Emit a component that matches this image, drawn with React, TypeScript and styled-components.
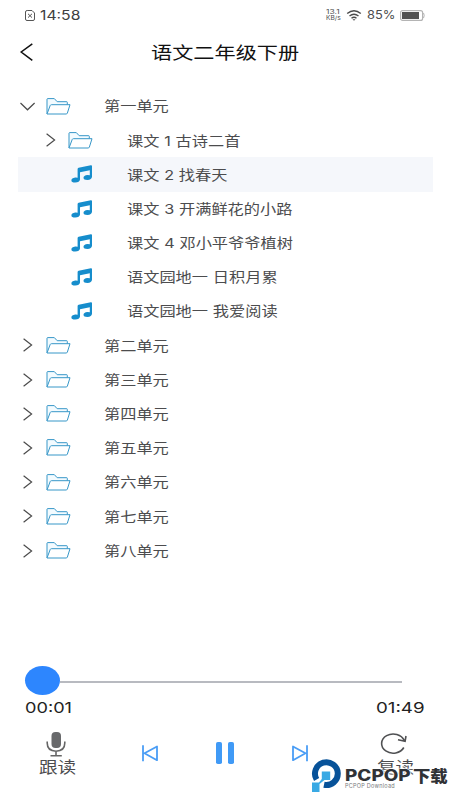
import React from "react";
import styled, { createGlobalStyle } from "styled-components";

const Global = createGlobalStyle`
  * { box-sizing: border-box; }
  html, body { margin: 0; background: #fff; }
  body { font-family: "Noto Sans CJK SC", sans-serif; overflow: hidden; }
  svg { display: block; overflow: visible; }
`;

const Screen = styled.main`
  position: relative;
  width: 450px;
  height: 800px;
  display: flex;
  flex-direction: column;
  background: #fff;
  overflow: hidden;
`;

/* Wide-set label: the glyphs are stretched horizontally from the left edge. */
const Label = styled.span<{ $size: number; $wide?: number; $color?: string; $weight?: number; $gap?: number; $track?: number; $font?: string }>`
  display: block;
  white-space: nowrap;
  transform-origin: 0 50%;
  transform: scaleX(${(p) => p.$wide ?? 1.2});
  font-family: ${(p) => (p.$font ? `"${p.$font}", ` : "")}"Noto Sans CJK SC", sans-serif;
  font-size: ${(p) => p.$size}px;
  line-height: 1;
  font-weight: ${(p) => p.$weight ?? 400};
  color: ${(p) => p.$color ?? "#4c4c4e"};
  word-spacing: ${(p) => p.$gap ?? 0}px;
  letter-spacing: ${(p) => p.$track ?? 0}px;
`;

const RowLabel = styled(Label)`
  padding-top: 2px;
`;

const StatusBar = styled.div`
  height: 30px;
  padding: 0 25px;
  display: flex;
  align-items: center;
`;
const Clock = styled.div`
  width: 301px;
  display: flex;
  align-items: center;
  gap: 5px;
`;
const Speed = styled.div`
  width: 21px;
  display: flex;
  flex-direction: column;
`;
const Percent = styled.div`
  width: 33px;
  margin-left: 6px;
  padding-top: 1px;
`;

const Header = styled.header`
  height: 59px;
  padding: 2px 0 0 20px;
  margin-top: -9px;
  display: flex;
  align-items: center;
`;
const Back = styled.div`
  width: 130.5px;
`;

const List = styled.div`
  height: 479px;
  padding: 9px 17.5px 0;
`;
const Row = styled.div<{ $active?: boolean; $nested?: boolean }>`
  height: 34.2px;
  display: grid;
  grid-template-columns: ${(p) => (p.$nested ? "50.5px 59px 1fr" : "28px 58.5px 1fr")};
  align-items: center;
  background: ${(p) => (p.$active ? "#f5f7fb" : "transparent")};
`;
const Arrow = styled.div<{ $open?: boolean; $nested?: boolean }>`
  padding-left: ${(p) => (p.$nested ? 28 : p.$open ? 2.5 : 5.5)}px;
`;
const NoteSlot = styled.div`
  padding-left: 3px;
`;

const Progress = styled.div`
  margin-top: 107px;
  height: 29px;
  padding: 0 48px 0 25px;
  display: flex;
  align-items: center;
`;
const Thumb = styled.div`
  width: 35px;
  height: 29px;
  border-radius: 50%;
  background: #2d86fe;
`;
const Track = styled.div`
  flex: 1;
  height: 2px;
  margin-top: 3px;
  background: #b8bac0;
`;
const Times = styled.div`
  height: 24px;
  padding: 0 25px;
  display: flex;
  align-items: center;
  justify-content: space-between;
`;
const TimeBox = styled.div`
  width: 49px;
`;
const Controls = styled.div`
  height: 64px;
  margin-top: 2px;
  display: grid;
  grid-template-columns: 142px 74px 76px 77px 1fr;
  align-items: center;
`;
const Mode = styled.div<{ $left: number }>`
  height: 60px;
  padding: 9px 0 0 ${(p) => p.$left}px;
  display: flex;
  flex-direction: column;
  gap: 2px;
`;
const ModeIcon = styled.div`
  padding-left: 7px;
  height: 25px;
`;
const Watermark = styled.div`
  position: absolute;
  left: 312px;
  top: 759px;
  display: flex;
  gap: 4px;
`;
const Brand = styled.div`
  padding-top: 9px;
  display: flex;
  flex-direction: column;
  gap: 1px;
  text-shadow: 0 0 1px #fff, 0 0 2px #fff, 0 0 2px #fff, 0 0 3px #fff;
`;
const BrandName = styled.div`
  display: grid;
  grid-template-columns: 68px 35px;
  align-items: center;
  height: 15px;
`;

const Chevron = ({ open }: { open?: boolean }) =>
  open ? (
    <svg width="15" height="9" fill="none" stroke="#4b4b4b" strokeWidth="1.2"><path d="M.5 1 7.5 7.8 14.6 1" /></svg>
  ) : (
    <svg width="9" height="14" fill="none" stroke="#4b4b4b" strokeWidth="1.2"><path d="M.6.7 8.6 7 .6 13.3" /></svg>
  );

const Folder = () => (
  <svg width="25" height="17" fill="#f3fbff" stroke="#3797c8" strokeWidth="1" strokeLinejoin="round">
    <path d="M1 16V1.2Q1 .6 2 .6H8.3L11.2 3.7H20.8Q21.3 3.7 21.3 4.5V6.7" />
    <path d="M1 16 4.2 7.5Q4.5 6.7 5.5 6.7H24L21.3 15.3Q21 16 20 16Z" fill="#fff" />
  </svg>
);

const Note = () => (
  <svg width="22" height="18" fill="#168dcc">
    <path d="M6.6 4Q6.6 3.1 7.6 2.8L19.8.3Q21 .1 21 1.2V11.7Q20.8 14.8 16.4 14.9 12.5 14.9 12.5 12.7 12.5 10.3 16.5 9.9 17.6 9.9 18.8 10.2V5.2L9 7.2V14.5Q8.6 17.4 4.2 17.5.4 17.5.4 15.4.4 13.2 4.2 12.6 5.3 12.5 6.6 12.8Z" />
  </svg>
);

const SkipIcon = ({ next }: { next?: boolean }) => (
  <svg width="16" height="17" fill="none" stroke="#4a9df5" strokeWidth="1.8" strokeLinejoin="round">
    <path d={next ? "M15 .3V16.3M1 1.5V15.2L13.5 8.3Z" : "M1 .3V16.3M15 1.5V15.2L2.5 8.3Z"} />
  </svg>
);

type Item = { text: string; kind: "unit" | "folder" | "song"; open?: boolean; active?: boolean };
const items: Item[] = [
  { text: "第一单元", kind: "unit", open: true },
  { text: "课文 1 古诗二首", kind: "folder" },
  { text: "课文 2 找春天", kind: "song", active: true },
  { text: "课文 3 开满鲜花的小路", kind: "song" },
  { text: "课文 4 邓小平爷爷植树", kind: "song" },
  { text: "语文园地一 日积月累", kind: "song" },
  { text: "语文园地一 我爱阅读", kind: "song" },
  ...["二", "三", "四", "五", "六", "七", "八"].map((n): Item => ({ text: `第${n}单元`, kind: "unit" })),
];

export default function App() {
  return (
    <Screen>
      <Global />
      <StatusBar>
        <Clock>
          <svg width="10" height="11" fill="none" stroke="#555" strokeWidth="1">
            <path d="M2.2.5H7L9.5 3V9Q9.5 10.5 8 10.5H2Q.5 10.5.5 9V2Q.5.5 2.2.5ZM3 3.8 7 7.6M7 3.8 3 7.6" />
          </svg>
          <Label $size={13} $wide={1.21} $font="Inter" $color="#404040">14:58</Label>
        </Clock>
        <Speed>
          <Label $size={6.5} $wide={1.3} $font="Inter">13.1</Label>
          <Label $size={6} $wide={1.1} $font="Inter">KB/s</Label>
        </Speed>
        <svg width="14" height="11" fill="none" stroke="#4b4b4b" strokeWidth="1.4">
          <path d="M.2 3.5Q7-2 13.8 3.5M2.5 6Q7 2.4 11.5 6M4.5 8.2Q7 6.2 9.5 8.2" />
          <path d="M5.5 9.2 7 10.7 8.5 9.2Z" fill="#4b4b4b" stroke="none" />
        </svg>
        <Percent><Label $size={11.5} $wide={1.12} $font="Inter">85%</Label></Percent>
        <svg width="25" height="11">
          <rect x=".6" y=".6" width="22" height="9.8" rx="2" fill="#fff" stroke="#b4b4b4" strokeWidth="1.2" />
          <rect x="2" y="2" width="17" height="7" fill="#515151" />
          <path d="M23.5 3Q25 5.5 23.5 8" fill="none" stroke="#b4b4b4" />
        </svg>
      </StatusBar>
      <Header>
        <Back>
          <svg width="13" height="18" fill="none" stroke="#111" strokeWidth="1.5"><path d="M12.3.8 1.2 9 12.3 17.4" /></svg>
        </Back>
        <Label $size={17.5} $wide={1.21} $color="#111">语文二年级下册</Label>
      </Header>
      <List>
        {items.map((it) => (
          <Row key={it.text} $active={it.active} $nested={it.kind !== "unit"}>
            <Arrow $open={it.open} $nested={it.kind !== "unit"}>
              {it.kind !== "song" && <Chevron open={it.open} />}
            </Arrow>
            {it.kind === "song" ? <NoteSlot><Note /></NoteSlot> : <Folder />}
            <RowLabel $size={13.5} $gap={0.2} $font="Inter">{it.text}</RowLabel>
          </Row>
        ))}
      </List>
      <Progress><Thumb /><Track /></Progress>
      <Times>
        <TimeBox><Label $size={15} $wide={1.21} $font="Inter" $color="#222">00:01</Label></TimeBox>
        <TimeBox><Label $size={15} $wide={1.25} $font="Inter" $color="#222">01:49</Label></TimeBox>
      </Times>
      <Controls>
        <Mode $left={39}>
          <ModeIcon>
            <svg width="20" height="25" fill="none" stroke="#666" strokeWidth="1.6">
              <rect x="5.5" y="0" width="9.5" height="16" rx="4" fill="#68696b" stroke="none" />
              <path d="M1.2 9.5V11Q1.2 19 10 19.2 18.8 19 18.8 11V9.5M10 19V23.5M4.5 23.7H15.8" />
            </svg>
          </ModeIcon>
          <Label $size={15.5} $wide={1.2}>跟读</Label>
        </Mode>
        <SkipIcon />
        <svg width="18" height="22" fill="#409af6">
          <rect width="6" height="22" rx="1.8" />
          <rect x="12" width="6" height="22" rx="1.8" />
        </svg>
        <SkipIcon next />
        <Mode $left={8}>
          <ModeIcon>
            <svg width="25" height="24" fill="none" stroke="#505153" strokeWidth="1.6">
              <path d="M19.8 15.5A11.6 9.6 0 1 1 20.2 8.5M14 7.8 21.1 9.2 22 4" />
            </svg>
          </ModeIcon>
          <Label $size={15.5} $wide={1.2}>复读</Label>
        </Mode>
      </Controls>
      <Watermark>
        <svg width="29" height="34">
          <path d="M4.6 20.5A11.4 11.4 0 1 1 12 25.8" fill="none" stroke="#075299" strokeWidth="6" />
          <path d="M9.8 12.6H18.2V21H12.5L7.5 25V33H0V23.5H7L9.8 20Z" fill="#39a9e4" />
        </svg>
        <Brand>
          <BrandName>
            <Label $size={15.5} $wide={1.22} $weight={800} $font="Inter" $color="#303236">PCPOP</Label>
            <Label $size={15.5} $wide={1.12} $weight={900} $color="#303236">下载</Label>
          </BrandName>
          <Label $size={5.5} $wide={1} $track={0.25} $font="Inter" $color="#77797c">PCPOP Download</Label>
        </Brand>
      </Watermark>
    </Screen>
  );
}
